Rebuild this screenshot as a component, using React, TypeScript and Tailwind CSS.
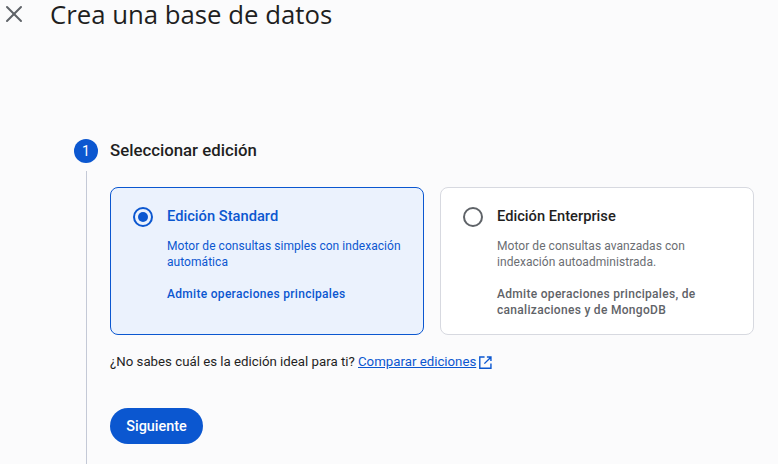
import { X } from 'lucide-react';

interface EditionCardProps {
  title: string;
  description: string;
  features: string;
  selected?: boolean;
}

function EditionCard({ title, description, features, selected = false }: EditionCardProps) {
  return (
    <div
      className={`flex w-[314px] h-[148px] gap-[14px] rounded-[8px] border pl-[22px] pr-[20px] pt-[18px] ${
        selected ? 'border-[#0b57d0] bg-[#ebf2fd]' : 'border-[#d7d9e0] bg-white'
      }`}
    >
      {/* Radio */}
      <div
        className={`mt-[1px] flex h-5 w-5 shrink-0 items-center justify-center rounded-full border-2 ${
          selected ? 'border-[#0b57d0]' : 'border-[#5f6368]'
        }`}
      >
        {selected && <div className="h-[10px] w-[10px] rounded-full bg-[#0b57d0]" />}
      </div>

      <div className="min-w-0 flex-1">
        <h3
          className={`text-[14.7px] leading-5 font-medium ${
            selected ? 'text-[#0b57d0]' : 'text-[#1f1f1f]'
          }`}
        >
          {title}
        </h3>
        <p
          className={`mt-[12px] text-[12px] leading-4 tracking-[0.05px] ${
            selected ? 'text-[#0b57d0]' : 'text-[#6b6e73]'
          }`}
        >
          {description}
        </p>
        <p
          className={`mt-4 text-[12px] leading-4 font-medium tracking-[0.3px] ${
            selected ? 'text-[#0b57d0]' : 'text-[#5f6368]'
          }`}
        >
          {features}
        </p>
      </div>
    </div>
  );
}

export default function App() {
  return (
    <div className="h-[464px] w-[778px] overflow-hidden bg-[#fbfbfc] font-['Roboto',sans-serif]">
      {/* Header */}
      <div className="flex h-[28px] items-center gap-[22px]">
        <X className="h-7 w-7 shrink-0 text-[#5f6368]" strokeWidth={1.7} />
        <h1 className="font-['Open_Sans',sans-serif] text-[25.75px] leading-[28px] font-medium text-[#1f1f1f]">
          Crea una base de datos
        </h1>
      </div>

      {/* Step */}
      <div className="mt-[111px] flex gap-3 pl-[74px]">
        <div className="flex w-6 shrink-0 flex-col items-center">
          <div className="flex h-6 w-6 items-center justify-center rounded-full bg-[#0b57d0] text-[14px] text-white">
            1
          </div>
          <div className="mt-2 h-[300px] w-px bg-[#c4c9d6]" />
        </div>

        <div className="min-w-0 flex-1">
          <h2 className="text-[16.8px] leading-[22px] font-medium text-[#1f1f1f]">Seleccionar edición</h2>

          <div className="mt-[26px] flex gap-4">
            <EditionCard
              selected
              title="Edición Standard"
              description="Motor de consultas simples con indexación automática"
              features="Admite operaciones principales"
            />
            <EditionCard
              title="Edición Enterprise"
              description="Motor de consultas avanzadas con indexación autoadministrada."
              features="Admite operaciones principales, de canalizaciones y de MongoDB"
            />
          </div>

          <p className="mt-[17px] flex items-center text-[13.25px] leading-5 text-[#1f1f1f]">
            ¿No sabes cuál es la edición ideal para ti?&nbsp;
            <a className="text-[#0b57d0] underline" href="#">
              Comparar ediciones
            </a>
            <svg className="ml-[2px] h-[15px] w-[15px] text-[#0b57d0]" viewBox="0 0 16 16" fill="none" stroke="currentColor" strokeWidth="1.5">
              <path d="M7 2.2H1.9v11.9h11.9V9" />
              <path d="M9.5 2.2h4.3v4.3M13.7 2.3 6.8 9.2" />
            </svg>
          </p>

          <button className="mt-[36px] h-9 w-[93px] rounded-full bg-[#0b57d0] pt-px text-[14.4px] font-medium text-white">
            Siguiente
          </button>
        </div>
      </div>
    </div>
  );
}
